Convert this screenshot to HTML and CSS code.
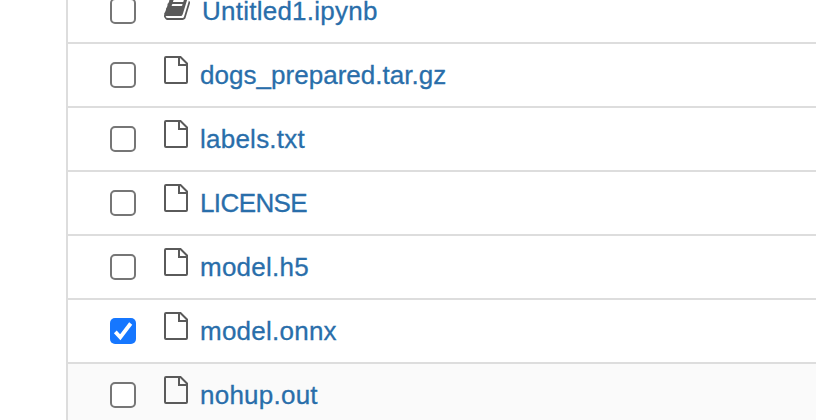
FILE: index.html
```
<!DOCTYPE html>
<html lang="en">
<head>
<meta charset="utf-8">
<title>Files</title>
<link rel="stylesheet" href="styles.css">
</head>
<body>
<svg width="0" height="0" class="defs">
  <symbol id="file" viewBox="0 0 24 28">
    <path d="M2 1H16.500L23 7.500V26Q23 27 22 27H2Q1 27 1 26V2Q1 1 2 1ZM15 1V9H23" fill="none" stroke="currentColor" stroke-width="2"/>
  </symbol>
</svg>
<main class="list">
  <div class="row">
    <input type="checkbox" class="check" aria-label="Untitled1.ipynb">
    <svg class="icon book" viewBox="0 0 1664 1792"><path fill="currentColor" d="M1639 478q40 57 18 129l-275 906q-19 64-76.500 107.500t-122.500 43.500h-923q-77 0-148.500-53.500t-99.500-131.500q-24-67-2-127 0-4 3-27t4-37q1-8-3-21.500t-3-19.500q2-11 8-21t16.500-23.500 16.500-23.500q23-38 45-91.500t30-91.500q3-10 .5-30t-.5-28q3-11 17-28t17-23q21-36 42-92t25-90q1-9-2.500-32t.5-28q4-13 22-30.500t22-22.500q19-26 42.500-84.500t27.500-96.500q1-8-3-25.500t-2-26.500q2-8 9-18t18-23 17-21q8-12 16.500-30.500t15-35 16-36 19.500-32 26.500-23.500 36-11.500 47.500 5.500l-1 3q38-9 51-9h761q74 0 114 56t18 130l-274 906q-36 119-71.500 153.500t-128.500 34.500h-869q-27 0-38 15-11 16-1 43 24 70 144 70h923q29 0 56-15.500t35-41.500l300-987q7-22 5-57 38 15 59 43zm-1064 2q-4 13 2 22.500t20 9.500h608q13 0 25.500-9.500t16.500-22.500l21-64q4-13-2-22.500t-20-9.500h-608q-13 0-25.500 9.500t-16.500 22.500zm-83 256q-4 13 2 22.500t20 9.500h608q13 0 25.500-9.500t16.500-22.500l21-64q4-13-2-22.500t-20-9.500h-608q-13 0-25.500 9.500t-16.500 22.500z"/></svg>
    <a class="name wide">Untitled1.ipynb</a>
  </div>
  <div class="row">
    <input type="checkbox" class="check" aria-label="dogs_prepared.tar.gz">
    <svg class="icon"><use href="#file"/></svg>
    <a class="name">dogs_prepared.tar.gz</a>
  </div>
  <div class="row">
    <input type="checkbox" class="check" aria-label="labels.txt">
    <svg class="icon"><use href="#file"/></svg>
    <a class="name wide">labels.txt</a>
  </div>
  <div class="row">
    <input type="checkbox" class="check" aria-label="LICENSE">
    <svg class="icon"><use href="#file"/></svg>
    <a class="name caps">LICENSE</a>
  </div>
  <div class="row">
    <input type="checkbox" class="check" aria-label="model.h5">
    <svg class="icon"><use href="#file"/></svg>
    <a class="name wide">model.h5</a>
  </div>
  <div class="row">
    <span class="check checked" role="checkbox" aria-checked="true" aria-label="model.onnx"><svg viewBox="0 0 26 26"><path d="M5.300 13.900 10.300 19.200 20.700 5.500" fill="none" stroke="#fff" stroke-width="3.800"/></svg></span>
    <svg class="icon"><use href="#file"/></svg>
    <a class="name wide">model.onnx</a>
  </div>
  <div class="row hover">
    <input type="checkbox" class="check" aria-label="nohup.out">
    <svg class="icon"><use href="#file"/></svg>
    <a class="name wide">nohup.out</a>
  </div>
</main>
</body>
</html>
```
FILE: styles.css
```
html,
body {
  margin: 0;
  height: 420px;
  overflow: hidden;
  background: #fff;
}

.defs {
  display: none;
}

.list {
  display: flow-root;
  margin-left: 66px;
  margin-top: -20px;
  border-left: 2px solid #ddd;
  font: 26px/36px "Liberation Sans", Arial, sans-serif;
}

.row {
  display: flex;
  align-items: center;
  box-sizing: border-box;
  height: 64px;
  padding-left: 42px;
  border-bottom: 2px solid #ddd;
}

.hover {
  background: #fafafa;
}

.check {
  appearance: none;
  flex: none;
  box-sizing: border-box;
  width: 26px;
  height: 26px;
  margin: 0;
  border: 2px solid #767676;
  border-radius: 5px;
  background: #fff;
}

.checked {
  border: 0;
  background: #1677ff;
}

.checked svg {
  display: block;
  width: 26px;
  height: 26px;
}

.icon {
  flex: none;
  width: 24px;
  height: 28px;
  margin: 0 12px 10px 28px;
  color: #5a5a5a;
}

.book {
  width: 26px;
  margin-bottom: 6px;
}

.name {
  color: #296eaa;
  white-space: nowrap;
  letter-spacing: 0.03px;
  -webkit-text-stroke: 0.3px #296eaa;
}

.wide {
  letter-spacing: 0.24px;
}

.caps {
  letter-spacing: -0.6px;
}
```
